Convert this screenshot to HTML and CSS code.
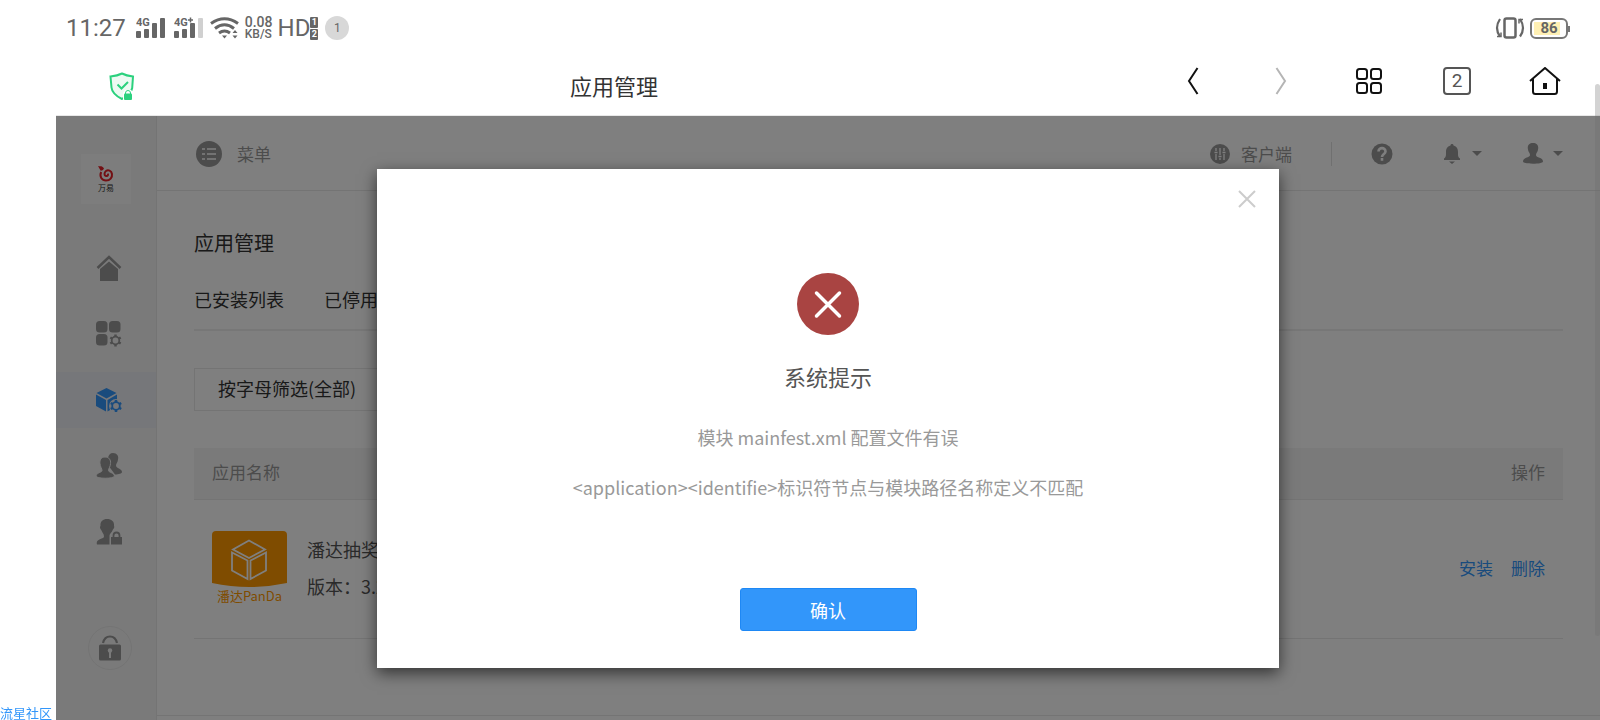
FILE: index.html
```html
<!DOCTYPE html>
<html lang="zh-CN">
<head>
  <meta charset="UTF-8">
  <meta name="viewport" content="width=device-width, initial-scale=1.0">
  <title>应用管理</title>
  <link rel="stylesheet" href="styles.css">
</head>
<body>
  <!-- Status bar -->
  <div class="status-bar">
    <span class="clock">11:27</span>
    <svg class="signal" width="30" height="24" viewBox="0 0 30 24">
      <text x="0" y="10" class="net-label">4G</text>
      <rect x="0" y="15" width="5" height="7" rx="1"/><rect x="8" y="13" width="5" height="9" rx="1"/>
      <rect x="16" y="7" width="5" height="15" rx="1"/><rect x="24" y="2" width="5" height="20" rx="1"/>
    </svg>
    <svg class="signal" width="30" height="24" viewBox="0 0 30 24">
      <text x="0" y="10" class="net-label">4G</text>
      <path d="M14 4h5M16.5 1.5v5" stroke="#666" stroke-width="1.5"/>
      <rect x="0" y="15" width="5" height="7" rx="1"/><rect x="8" y="13" width="5" height="9" rx="1"/>
      <rect x="16" y="7" width="5" height="15" rx="1"/><rect x="24" y="2" width="5" height="20" rx="1" fill="#d0d0d0"/>
    </svg>
    <svg class="wifi" width="30" height="24" viewBox="0 0 30 24" fill="none" stroke="#666" stroke-width="3">
      <path d="M1 7.500Q14.500-2 28 7.500M5 12.500Q14.500 5 24 12.500M9 17Q14.500 13 20 17"/>
      <path d="M12 19.500h5l-2.500 3zM22.500 17l2.500-3 2.500 3zM22.500 19.500l2.500 3 2.500-3z" fill="#666" stroke="none"/>
    </svg>
    <span class="speed"><span>0.08</span><span class="unit">KB/S</span></span>
    <span class="hd">HD</span>
    <span class="sims"><span>1</span><span>2</span></span>
    <span class="notice">1</span>
    <span class="status-right">
      <svg width="30" height="24" viewBox="0 0 30 24" fill="none" stroke="#666">
        <rect x="9.500" y="2.500" width="11" height="19" rx="2" stroke-width="2.500"/>
        <path d="M5 3Q-1 12 5 20.500M25 3Q31 12 25 20.500" stroke-width="2.200"/>
        <path d="M2 20.500h4v-4M28 3.500h-4v4" stroke-width="1.500"/>
      </svg>
      <span class="battery"><span>86</span></span>
    </span>
  </div>

  <!-- Browser toolbar -->
  <div class="toolbar">
    <svg class="shield" width="26" height="28" viewBox="0 0 26 28">
      <path d="M13 1.500c3.500 1.800 7 2.500 11 3l-.8 11.500c-.7 5-5.200 8-10.200 11C7 24 3 21 2.500 15.500L1.500 4.500C6 4 9.500 3.300 13 1.500z" fill="#edfaf3" stroke="#2bd17e" stroke-width="2"/>
      <path d="M8.500 12.500l4 4 6.500-6.500" fill="none" stroke="#2bd17e" stroke-width="2"/>
      <path d="M14 28v-7l2-3h6l3 3v7z" fill="#fff"/>
      <path d="M16.500 22v-1a2.500 2.500 0 0 1 5 0v1" fill="#fff" stroke="#2bd17e"/>
      <rect x="15" y="21.500" width="8" height="6.500" rx="1" fill="#2bd17e"/>
    </svg>
    <span class="page-name">应用管理</span>
    <div class="nav">
      <button type="button" aria-label="后退"><svg width="12" height="28" viewBox="0 0 12 28"><path d="M10.500 1L2 14l8.500 13" fill="none" stroke="#111" stroke-width="2"/></svg></button>
      <button type="button" aria-label="前进"><svg width="12" height="28" viewBox="0 0 12 28"><path d="M1.500 1L10 14 1.500 27" fill="none" stroke="#b5b5b5" stroke-width="2"/></svg></button>
      <button type="button" aria-label="菜单"><svg width="28" height="28" viewBox="0 0 28 28" fill="none" stroke="#111" stroke-width="2"><rect x="2" y="2" width="10" height="10" rx="2.500"/><rect x="16" y="2" width="10" height="10" rx="2.500"/><rect x="2" y="16" width="10" height="10" rx="2.500"/><rect x="16" y="16" width="10" height="10" rx="2.500"/></svg></button>
      <button type="button" aria-label="窗口"><span class="tab-count">2</span></button>
      <button type="button" aria-label="主页"><svg width="32" height="28" viewBox="0 0 32 28"><path d="M1 14L16 1l15 13M4 12v12.500q0 2.500 2.500 2.500h19q2.500 0 2.500-2.500V12" fill="none" stroke="#111" stroke-width="2"/><path d="M14 16h4v6h-4z" fill="#111"/></svg></button>
    </div>
  </div>

  <div class="page">
    <!-- Sidebar -->
    <aside class="sidebar">
      <div class="logo">
        <svg width="16" height="16" viewBox="0 0 16 16" fill="none" stroke="#e62129"><path d="M3.200 6C1 10.500 4 14.500 8 14.500c4 0 6.500-3 6-6.500C13.500 4.500 10 3.500 8 5c-2 1.500-2 4.500 0 5s2.500-1.500 1.500-2.200" stroke-width="2"/><path d="M0 0c3 .5 4-.5 6 2.500C5 4.500 3 5 2.500 4.500z" fill="#e62129" stroke="none"/></svg>
        <span>万易</span>
      </div>
      <nav class="side-nav">
        <a href="#" aria-label="首页"><svg width="26" height="26" viewBox="0 0 26 26"><path d="M1.500 13L13 2l11.500 11" fill="none" stroke="#999" stroke-width="2.500"/><path d="M4 14L13 6.500l9 7.500v12H4z"/></svg></a>
        <a href="#" aria-label="模块">
          <svg width="26" height="26" viewBox="0 0 26 26">
            <rect x="0" y="0" width="11.500" height="11.500" rx="3.500"/><rect x="13" y="0" width="11.500" height="11.500" rx="3.500"/><rect x="0" y="13" width="11.500" height="11.500" rx="3.500"/>
            <path d="M19.500 13.500v12M14.300 16.500l10.400 6M24.700 16.500l-10.400 6" stroke="#999" stroke-width="2.500"/>
            <circle cx="19.500" cy="19.500" r="3.800" fill="#f5f5f5" stroke="#999" stroke-width="1.800"/>
          </svg>
        </a>
        <a href="#" class="active" aria-label="应用">
          <svg width="26" height="26" viewBox="0 0 26 26">
            <path d="M10.500 1l10 5-10 5.500L.5 6zM0 7.500l10 5.500v11.500L0 19zM21 7.500V19l-9.500 5.500V13z"/>
            <circle cx="20" cy="19" r="7" fill="#eceef5"/>
            <path d="M20 13v12M14.800 16l10.400 6M25.200 16l-10.400 6" stroke="#3296fa" stroke-width="2.500"/>
            <circle cx="20" cy="19" r="3.800" fill="#eceef5" stroke="#3296fa" stroke-width="1.800"/>
          </svg>
        </a>
        <a href="#" aria-label="用户">
          <svg width="26" height="26" viewBox="0 0 26 26">
            <path d="M17 0c4 0 6 3 5 6.500 0 2.500-2 4-2 6 0 3 6 3 6 6.500 0 1.500-3 2.500-7 2.500L12 12V5c.5-3 2-5 5-5z"/>
            <path d="M9 4c4 0 6 3 5.500 6.500 0 3-2 5-2 7 0 2 5.500 2 6 5.500 0 3-18.500 3-18.500 0C.5 19.500 6 19.500 6 17.500c0-2-2-4-2-7C3.500 7 5 4 9 4z" stroke="#f5f5f5"/>
          </svg>
        </a>
        <a href="#" aria-label="权限">
          <svg width="26" height="26" viewBox="0 0 26 26">
            <path d="M11 0c5 0 7.500 3 7 7 1 2-1 3-1.500 4.500-.5 2-3 3-3 5v9H1c-2-6 7-5 7-8 0-3-2-4-2.500-6C4 10 3.500 8 4.500 7 4 3 6.500 0 11 0z"/>
            <path d="M15 18h11v7.500H15z"/>
            <path d="M17.500 18v-1.500a3 3 0 0 1 6 0V18" fill="none" stroke="#999" stroke-width="1.800"/>
          </svg>
        </a>
      </nav>
      <button type="button" class="lock" aria-label="锁定"><svg width="22" height="26" viewBox="0 0 22 26"><path d="M4 8q1.500-6.500 7-6.500T18 8" fill="none" stroke="#999" stroke-width="2.200"/><rect x="0" y="9.500" width="22" height="16" rx="1.500"/><circle cx="11" cy="15.500" r="2.200" fill="#f5f5f5"/><path d="M10 16h2v7h-2z" fill="#f5f5f5"/></svg></button>
    </aside>

    <main class="main">
      <header class="header">
        <svg width="26" height="26" viewBox="0 0 26 26"><circle cx="13" cy="13" r="13" fill="#999"/><path d="M6 8h3M11 8h9M6 13h3M11 13h9M6 18h3M11 18h9" stroke="#fff" stroke-width="1.500"/></svg>
        <span class="menu-name">菜单</span>
        <div class="tools">
          <a href="#" class="client"><svg width="20" height="20" viewBox="0 0 20 20"><circle cx="10" cy="10" r="10" fill="#999"/><path d="M6 4v3M6 10v6M10 4v7M10 14v2M14 4v3M14 10v6M4.500 8.500h3M8.500 12.500h3M12.500 8.500h3" stroke="#fff" stroke-width="1.300"/></svg>客户端</a>
          <a href="#" class="help" aria-label="帮助"><svg width="22" height="22" viewBox="0 0 22 22"><circle cx="11" cy="11" r="10.500" fill="#999"/><path d="M7.500 8.500c0-4.500 7-4.500 7 0 0 2.500-3.500 2.500-3.500 5.500M11 15v2.800" fill="none" stroke="#fff" stroke-width="2.600"/></svg></a>
          <a href="#" class="drop" aria-label="消息"><svg width="16" height="20" viewBox="0 0 16 20"><path d="M8 0c1 0 1.500.5 1.500 1.500C13 2.500 14 5 14 8c0 4 0 5 2 6.500V16H0v-1.500C2 13 2 12 2 8c0-3 1-5.500 4.500-6.500C6.500.5 7 0 8 0zM5 17.500h6L8 20z"/></svg><i class="caret"></i></a>
          <a href="#" class="drop" aria-label="账户"><svg width="20" height="21" viewBox="0 0 20 21"><path d="M10 0c4 0 6 3 5 6.500 0 2-2 3.500-2 5.500 0 3 7 2 7 6.500 0 3-20 3-20 0C0 14 7 15 7 12c0-2-2-3.500-2-5.500C4 3 6 0 10 0z"/></svg><i class="caret"></i></a>
        </div>
      </header>

      <section class="content">
        <h1>应用管理</h1>
        <div class="tabs"><a href="#">已安装列表</a><a href="#">已停用列表</a></div>
        <select class="filter" aria-label="按字母筛选"><option>按字母筛选(全部)</option></select>
        <table class="apps">
          <thead>
            <tr><th>应用名称</th><th class="actions">操作</th></tr>
          </thead>
          <tbody>
            <tr>
              <td>
                <div class="app">
                  <div class="app-logo">
                    <svg width="75" height="56" viewBox="0 0 75 56"><path d="M0 4q0-4 4-4h67q4 0 4 4v48q-37.500 8-75 0z" fill="#ff9800"/><path d="M37 9.500l16 9-16 8.500-16-8.500zM20 21.500l15.500 8V48L20 39.500zM54 21.500l-15.500 8V48L54 39.500z" fill="none" stroke="#fff" stroke-width="1.800"/></svg>
                    <span>潘达PanDa</span>
                  </div>
                  <div class="app-info"><p>潘达抽奖</p><p>版本：3.2.0</p></div>
                </div>
              </td>
              <td class="actions"><a href="#">安装</a><a href="#">删除</a></td>
            </tr>
          </tbody>
        </table>
      </section>
      <footer class="footer"></footer>
    </main>

    <!-- Message dialog -->
    <div class="overlay">
      <div class="modal" role="dialog" aria-labelledby="modal-title">
        <button type="button" class="close" aria-label="关闭"><svg width="18" height="18" viewBox="0 0 18 18"><path d="M1 1l16 16M17 1L1 17" stroke="#ccc" stroke-width="2"/></svg></button>
        <svg class="error-icon" width="62" height="62" viewBox="0 0 62 62"><circle cx="31" cy="31" r="31" fill="#a94442"/><path d="M19.500 20l23 23M42.500 20l-23 23" stroke="#fff" stroke-width="3.500" stroke-linecap="round"/></svg>
        <h2 id="modal-title">系统提示</h2>
        <p>模块 mainfest.xml 配置文件有误</p>
        <p>&lt;application&gt;&lt;identifie&gt;标识符节点与模块路径名称定义不匹配</p>
        <button type="button" class="confirm">确认</button>
      </div>
    </div>
  </div>

  <div class="scrollbar"></div>
  <span class="watermark">流星社区</span>
</body>
</html>
```

FILE: styles.css
```css
/* General */
* {
  box-sizing: border-box;
}

body {
  margin: 0;
  height: 100vh;
  overflow: hidden;
  padding-left: 56px;
  display: flex;
  flex-direction: column;
  background: #fff;
  color: #333;
  font-family: "Noto Sans CJK SC", sans-serif;
  font-size: 17px;
  line-height: 24px;
}

h1, h2, p {
  margin: 0;
  font-weight: 400;
}

a {
  color: inherit;
  text-decoration: none;
}

button {
  padding: 0;
  border: none;
  background: none;
  font: inherit;
  cursor: pointer;
}

svg {
  display: block;
  flex: none;
}

/* Status bar */
.status-bar {
  height: 56px;
  padding: 0 32px 0 10px;
  display: flex;
  align-items: center;
  color: #666;
  font-family: Roboto, sans-serif;
}

.clock, .hd {
  font-size: 24px;
}

.signal {
  margin-left: 8px;
  fill: #666;
}

.clock + .signal {
  margin-left: 10px;
}

.net-label {
  font-size: 11px;
  font-weight: 700;
}

.wifi {
  margin-left: 6px;
}

.speed {
  display: flex;
  flex-direction: column;
  margin: 0 5px;
  font-size: 14px;
  line-height: 12px;
  font-weight: 500;
}

.unit {
  font-size: 12px;
}

.sims {
  display: flex;
  flex-direction: column;
  gap: 1px;
}

.sims span {
  width: 8px;
  border-radius: 1px;
  background: #666;
  color: #fff;
  font-size: 9px;
  font-weight: 700;
  line-height: 11px;
  text-align: center;
}

.notice {
  width: 24px;
  margin-left: 7px;
  border-radius: 50%;
  background: #d8d8d8;
  font-size: 12px;
  text-align: center;
}

.status-right {
  display: flex;
  align-items: center;
  gap: 5px;
  margin-left: auto;
}

.battery {
  position: relative;
  width: 38px;
  padding: 2px;
  border: 2px solid #777;
  border-radius: 6px;
}

.battery::after {
  content: "";
  position: absolute;
  top: 6px;
  right: -4px;
  width: 2px;
  height: 6px;
  background: #777;
}

.battery span {
  display: block;
  background: linear-gradient(90deg, #fff0b3 86%, #fff 86%);
  font-size: 15px;
  font-weight: 700;
  line-height: 13px;
  text-align: center;
}

/* Browser toolbar */
.toolbar {
  height: 60px;
  padding: 0 11px 0 53px;
  display: grid;
  grid-template-columns: 26px 1fr auto;
  align-items: center;
  border-bottom: 1px solid #e8e8e8;
}

.page-name {
  padding: 0 56px 2px 0;
  font-size: 22px;
  line-height: 32px;
  text-align: center;
}

.nav {
  display: flex;
  padding-bottom: 10px;
}

.nav button {
  width: 88px;
  height: 32px;
  display: flex;
  align-items: center;
  justify-content: center;
}

.tab-count {
  width: 28px;
  border: 2px solid #555;
  border-radius: 4px;
  color: #555;
  font-family: Roboto, sans-serif;
  font-size: 19px;
}

/* Page */
.page {
  position: relative;
  flex: 1;
  min-height: 0;
  display: flex;
}

.sidebar {
  width: 101px;
  flex: none;
  display: flex;
  flex-direction: column;
  align-items: center;
  padding-top: 38px;
  background: #f5f5f5;
  border-right: 1px solid #e8e8e8;
}

.logo {
  width: 50px;
  height: 50px;
  display: flex;
  flex-direction: column;
  align-items: center;
  justify-content: center;
  background: #fafafa;
  font-size: 8px;
  line-height: 11px;
}

.side-nav {
  align-self: stretch;
  display: flex;
  flex-direction: column;
  gap: 10px;
  margin: 36px 0 66px;
}

.side-nav a {
  height: 56px;
  padding-left: 6px;
  display: flex;
  align-items: center;
  justify-content: center;
  fill: #999;
}

.side-nav .active {
  background: #eceef5;
  fill: #3296fa;
}

.lock {
  width: 44px;
  height: 44px;
  margin-left: 8px;
  display: flex;
  align-items: center;
  justify-content: center;
  border: 1px solid #e8e8e8;
  border-radius: 50%;
  fill: #999;
}

.main {
  flex: 1;
  display: flex;
  flex-direction: column;
}

.header {
  height: 75px;
  flex: none;
  padding: 1px 37px 0 39px;
  display: flex;
  align-items: center;
  border-bottom: 1px solid #e8e8e8;
  color: #999;
}

.menu-name {
  margin-left: 15px;
}

.tools {
  display: flex;
  align-items: center;
  margin-left: auto;
  fill: #999;
}

.client {
  display: flex;
  align-items: center;
  gap: 11px;
  padding-right: 39px;
  border-right: 1px solid #e0e0e0;
}

.help {
  margin: 0 51px 0 39px;
}

.drop {
  display: flex;
  align-items: center;
  gap: 12px;
}

.drop + .drop {
  gap: 10px;
  margin-left: 41px;
}

.caret {
  border: 5px solid transparent;
  border-top-color: #999;
  border-bottom: 0;
}

/* Content */
.content {
  flex: 1;
  padding: 35px 37px 0;
}

h1 {
  font-size: 20px;
  line-height: 34px;
}

.tabs {
  display: flex;
  gap: 40px;
  padding: 27px 0 18px;
  border-bottom: 2px solid #eee;
  font-size: 18px;
}

.filter {
  width: 260px;
  height: 43px;
  margin: 37px 0;
  padding: 0 23px 3px;
  display: block;
  appearance: none;
  border: 1px solid #e8e8e8;
  background: #fff;
  color: #333;
  font: inherit;
  font-size: 18px;
}

.apps {
  width: 100%;
  border-collapse: collapse;
}

.apps th {
  height: 51px;
  padding: 0 18px 2px;
  background: #f5f5f5;
  border-bottom: 1px solid #e8e8e8;
  color: #999;
  font-weight: 400;
  text-align: left;
}

.apps td {
  height: 139px;
  padding: 0 18px 2px;
  border-bottom: 1px solid #e8e8e8;
}

.apps .actions {
  text-align: right;
}

.actions a {
  margin-left: 18px;
  color: #3296fa;
}

.app {
  display: flex;
  align-items: center;
  gap: 20px;
}

.app-logo {
  color: #ff9800;
  font-size: 13px;
  line-height: 18px;
  text-align: center;
}

.app-info {
  display: flex;
  flex-direction: column;
  gap: 13px;
  color: #555;
  font-size: 18px;
}

.footer {
  height: 5px;
  border-top: 1px solid #e8e8e8;
}

/* Dialog */
.overlay {
  position: absolute;
  inset: 0;
  display: flex;
  justify-content: center;
  align-items: flex-start;
  padding-top: 53px;
  background: rgba(0, 0, 0, 0.5);
}

.modal {
  position: relative;
  width: 902px;
  max-width: 90%;
  padding: 104px 40px 37px;
  display: flex;
  flex-direction: column;
  align-items: center;
  background: #fff;
  box-shadow: 0 5px 15px rgba(0, 0, 0, 0.6);
  color: #999;
  font-size: 18px;
}

.close {
  position: absolute;
  top: 21px;
  right: 23px;
}

h2 {
  margin: 25px 0 33px;
  color: #555;
  font-size: 22px;
  line-height: 32px;
}

.modal p {
  margin-bottom: 26px;
  text-align: center;
}

.confirm {
  width: 177px;
  height: 43px;
  margin-top: 63px;
  border: 1px solid #1e88f5;
  border-radius: 3px;
  background: #3296fa;
  color: #fff;
}

.scrollbar {
  position: fixed;
  top: 84px;
  right: 0;
  width: 5px;
  height: 552px;
  border-radius: 3px;
  background: rgba(110, 110, 110, 0.3);
}

.watermark {
  position: fixed;
  bottom: 0;
  left: 0;
  color: #3296fa;
  font-size: 13px;
  line-height: 14px;
}
```
